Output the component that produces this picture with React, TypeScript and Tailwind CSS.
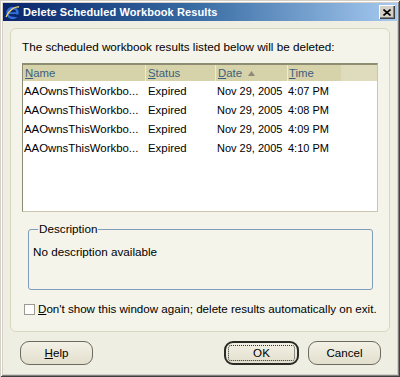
import React from "react";

const rows = [
  { name: "AAOwnsThisWorkbo...", status: "Expired", date: "Nov 29, 2005", time: "4:07 PM" },
  { name: "AAOwnsThisWorkbo...", status: "Expired", date: "Nov 29, 2005", time: "4:08 PM" },
  { name: "AAOwnsThisWorkbo...", status: "Expired", date: "Nov 29, 2005", time: "4:09 PM" },
  { name: "AAOwnsThisWorkbo...", status: "Expired", date: "Nov 29, 2005", time: "4:10 PM" },
];

function TitleIcon() {
  return (
    <svg width="15" height="15" viewBox="0 0 15 15">
      <circle cx="7.5" cy="8" r="5" fill="none" stroke="#2f6fd6" strokeWidth="2.4" />
      <rect x="3" y="7.2" width="9" height="1.8" fill="#2f6fd6" />
      <rect x="9" y="9.5" width="4.5" height="2.5" fill="#0a246a" />
      <path d="M1 12 C 3 6, 10 1, 14 2" fill="none" stroke="#f3d36a" strokeWidth="1.3" />
    </svg>
  );
}

function U({ c }: { c: string }) {
  return <span className="underline underline-offset-[1px]">{c}</span>;
}

export default function App() {
  return (
    <div
      className="w-[400px] h-[377px] flex flex-col bg-[#d4d0c8] p-[3px] shadow-[inset_1px_1px_0_#d4d0c8,inset_-1px_-1px_0_#404040,inset_2px_2px_0_#ffffff,inset_-2px_-2px_0_#808080]"
      style={{ fontFamily: '"Liberation Sans", Arial, sans-serif' }}
    >
      {/* Title bar */}
      <div className="h-[18px] flex items-center bg-gradient-to-r from-[#0a246a] via-[#3a6ea5] to-[#a6caf0] pl-[2px] pr-[2px]">
        <TitleIcon />
        <span className="ml-[3px] text-white font-bold text-[11px] leading-[14px] tracking-[0.1px]">
          Delete Scheduled Workbook Results
        </span>
        <div className="ml-auto w-[16px] h-[14px] bg-[#d4d0c8] flex items-center justify-center shadow-[inset_1px_1px_0_#ffffff,inset_-1px_-1px_0_#404040,inset_-2px_-2px_0_#808080]">
          <svg width="8" height="7" viewBox="0 0 8 7">
            <path d="M0.5 0.5 L7.5 6.5 M7.5 0.5 L0.5 6.5" stroke="#000" strokeWidth="1.6" />
          </svg>
        </div>
      </div>

      {/* Content */}
      <div className="flex-1 flex flex-col bg-[#efeee3] px-[7px]">
        <div className="mt-[7px] h-[304px] rounded-[6px] border border-[#d9d6c0] bg-[#f5f4ea] pl-[11px] pr-[11px] flex flex-col">
          <div className="pt-[11px] text-[11.7px] leading-[14px] text-black whitespace-nowrap">
            The scheduled workbook results listed below will be deleted:
          </div>

          {/* Table */}
          <div className="mt-[9px] h-[149px] bg-white border border-[#c9c6ad] border-t-[2px] border-t-[#8e8c72] border-l-[#8e8c72] flex flex-col">
            <div className="h-[16px] bg-[#d6d3aa] flex text-[11.4px] leading-[16px] text-[#3d5f7e]">
              <div className="w-[122px] pl-[2px]"><U c="N" />ame</div>
              <div className="w-[70px] pl-[2px] border-l border-[#ecebd8]"><U c="S" />tatus</div>
              <div className="w-[72px] pl-[2px] border-l border-[#ecebd8] flex items-center">
                <span><U c="D" />ate</span>
                <svg className="ml-[6px]" width="7" height="5" viewBox="0 0 7 5">
                  <path d="M0 5 L3.5 0 L7 5 Z" fill="#8d8b78" />
                </svg>
              </div>
              <div className="w-[54px] pl-[1px] border-l border-[#ecebd8]"><U c="T" />ime</div>
              <div className="flex-1 bg-[#dedcbd]" />
            </div>
            <div className="flex flex-col pt-[1px]">
              {rows.map((r, i) => (
                <div key={i} className="h-[19px] flex text-[11.4px] leading-[19px] text-black">
                  <div className="w-[123px] pl-[1px] whitespace-nowrap">{r.name}</div>
                  <div className="w-[70px] pl-[2px]">{r.status}</div>
                  <div className="w-[71px] pl-[1px] whitespace-nowrap text-[11px]">{r.date}</div>
                  <div className="pl-[1px] whitespace-nowrap text-[11px]">{r.time}</div>
                </div>
              ))}
            </div>
          </div>

          {/* Description */}
          <fieldset className="mt-[10px] ml-[6px] mr-[5px] h-[68px] border border-[#7f9db9] rounded-[3px] pl-[4px]">
            <legend className="ml-[5px] px-[1px] text-[11.7px] leading-[14px] text-black">Description</legend>
            <div className="mt-[9px] text-[11.7px] leading-[14px] text-black">No description available</div>
          </fieldset>

          {/* Checkbox */}
          <div className="mt-[12px] flex items-center">
            <div className="ml-[2px] w-[11px] h-[11px] bg-white border border-[#9a9a90]" />
            <span className="ml-[3px] text-[11.6px] leading-[14px] text-black whitespace-nowrap">
              <U c="D" />on't show this window again; delete results automatically on exit.
            </span>
          </div>
        </div>

        {/* Buttons */}
        <div className="mt-[9px] flex items-center pl-[10px] pr-[9px]">
          <button className="w-[73px] h-[24px] rounded-[9px] border border-[#6d6b60] bg-gradient-to-b from-[#f3f1e6] to-[#e2dfcd] text-[11.6px] text-black">
            <U c="H" />elp
          </button>
          <button className="ml-auto w-[75px] h-[24px] rounded-[9px] border-2 border-[#2b2a25] bg-gradient-to-b from-[#f3f1e6] to-[#e2dfcd] text-[11.6px] text-black p-[2px]">
            <div className="w-full h-full border border-dotted border-[#333] rounded-[3px] flex items-center justify-center">OK</div>
          </button>
          <button className="ml-[9px] w-[73px] h-[24px] rounded-[9px] border border-[#6d6b60] bg-gradient-to-b from-[#f3f1e6] to-[#e2dfcd] text-[11.6px] text-black">
            Cancel
          </button>
        </div>
      </div>
    </div>
  );
}
